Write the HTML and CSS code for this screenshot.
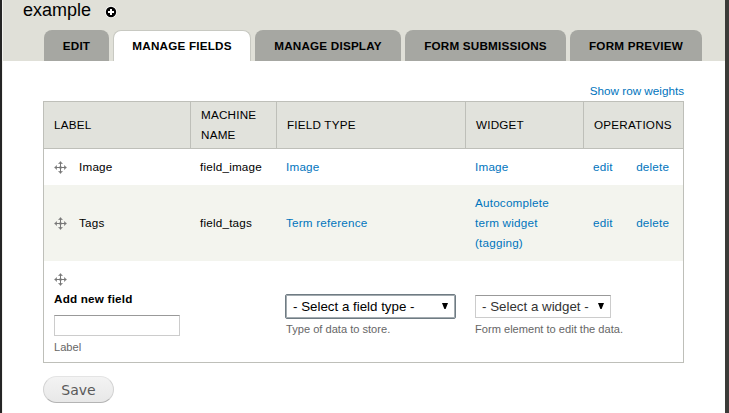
FILE: index.html
```
<!DOCTYPE html>
<html lang="en">
<head>
<meta charset="utf-8">
<title>example</title>
<link rel="stylesheet" href="styles.css">
</head>
<body>
<svg class="defs" width="0" height="0" aria-hidden="true">
  <symbol id="move" viewBox="0 0 13 13">
    <path d="M6 1h1v11H6zM1 6h11v1H1z" fill="#777"/>
    <path d="M6.5 0L9 3H4zM6.5 13L4 10h5zM0 6.5L3 4v5zM13 6.5L10 9V4z" fill="#777" opacity=".8"/>
    <path d="M5 5h3v3H5z" fill="#777" opacity=".35"/>
  </symbol>
</svg>
<div class="overlay">
  <header class="header">
    <div class="title-row">
      <h1>example</h1>
      <svg class="add" viewBox="0 0 12 12"><circle cx="6" cy="6" r="5.9" fill="#fff"/><circle cx="6" cy="6" r="5.2" fill="#000"/><path d="M5 3h2v2h2v2H7v2H5V7H3V5h2z" fill="#fff"/></svg>
    </div>
    <nav class="tabs">
      <a class="tab tab-edit">EDIT</a>
      <a class="tab tab-fields active">MANAGE FIELDS</a>
      <a class="tab tab-display">MANAGE DISPLAY</a>
      <a class="tab tab-submissions">FORM SUBMISSIONS</a>
      <a class="tab tab-preview">FORM PREVIEW</a>
    </nav>
  </header>
  <main class="content">
    <div class="weights"><a>Show row weights</a></div>
    <div class="table">
      <div class="row head">
        <div>LABEL</div><div>MACHINE NAME</div><div>FIELD TYPE</div><div>WIDGET</div><div>OPERATIONS</div>
      </div>
      <div class="row image-row">
        <div><svg class="move"><use href="#move"/></svg>Image</div><div>field_image</div><div><a>Image</a></div><div><a>Image</a></div><div class="ops"><a>edit</a><a>delete</a></div>
      </div>
      <div class="row tags-row">
        <div><svg class="move"><use href="#move"/></svg>Tags</div><div>field_tags</div><div><a>Term reference</a></div><div><a>Autocomplete term widget (tagging)</a></div><div class="ops"><a>edit</a><a>delete</a></div>
      </div>
      <div class="row new-row">
        <div class="new-label">
          <svg class="move"><use href="#move"/></svg>
          <strong>Add new field</strong>
          <input type="text" aria-label="Label">
          <small>Label</small>
        </div>
        <div></div>
        <div class="new-select">
          <span class="select focused"><span>- Select a field type -</span><svg viewBox="0 0 6 6"><path d="M0 0h6L3.6 6H2.4z"/></svg></span>
          <small>Type of data to store.</small>
        </div>
        <div class="new-select">
          <span class="select"><span>- Select a widget -</span><svg viewBox="0 0 6 6"><path d="M0 0h6L3.6 6H2.4z"/></svg></span>
          <small>Form element to edit the data.</small>
        </div>
        <div></div>
      </div>
    </div>
    <button class="save">Save</button>
  </main>
</div>
</body>
</html>
```
FILE: styles.css
```
* { box-sizing: border-box; }
body {
  margin: 0;
  height: 413px;
  overflow: hidden;
  padding: 0 4px 0 2px;
  background: linear-gradient(90deg, #252525 0 2px, #3b3b38 2px);
  font: 11.7px/20px "Liberation Sans", Arial, sans-serif;
  color: #000;
}
.defs { position: absolute; }
.overlay { height: 413px; background: #fff; border-left: 1px solid #f2f2ee; }
.header { height: 61px; background: #e0e0d8; display: flex; flex-direction: column; }
.title-row { height: 30px; padding-left: 20px; display: flex; }
h1 { margin: 0; font-size: 18px; line-height: 20px; font-weight: normal; width: 82px; }
.add { width: 12px; height: 12px; margin-top: 6px; }
.tabs { display: flex; gap: 4px; padding-left: 41px; height: 31px; }
.tab {
  height: 31px;
  border-radius: 8px 8px 0 0;
  background: #a6a7a2;
  font-size: 11.7px;
  line-height: 32px;
  font-weight: bold;
  letter-spacing: 0.2px;
  text-align: center;
  white-space: nowrap;
}
.tab-edit { width: 65px; }
.tab-fields { width: 138px; }
.tab-display { width: 146px; }
.tab-submissions { width: 161px; }
.tab-preview { width: 132px; }
.tab.active { background: #fff; border: 1px solid #c8c9c2; border-bottom: 0; line-height: 30px; }
.content { padding: 20px 41px 0 40px; }
a { color: #0074bd; }
.tab { color: #000; }
.weights { height: 20px; text-align: right; }
.table { width: 641px; border: 1px solid #bebfb9; letter-spacing: 0.2px; }
.row { display: grid; grid-template-columns: 146px 86px 189px 118px 100px; align-items: center; }
.row > div { padding-left: 10px; }
.head { height: 47px; background: #e1e2dc; align-items: stretch; }
.head > div { display: flex; align-items: center; border-bottom: 1px solid #bebfb9; }
.head > div + div { border-left: 1px solid #bebfb9; }
.image-row { height: 36px; }
.tags-row { height: 76px; background: #f3f4ee; }
.new-row { height: 101px; align-items: start; }
.move { width: 13px; height: 13px; display: inline-block; vertical-align: -3px; margin-right: 12px; }
.tags-row > div:nth-child(4) { padding-right: 28px; }
.ops { display: flex; gap: 23.5px; }
.new-label { display: flex; flex-direction: column; align-items: flex-start; padding-top: 12px; }
.new-label strong { margin-top: 3px; }
input { width: 126px; height: 21px; margin-top: 6px; padding: 2px; border: 1px solid #ccc; border-top-color: #999; background: #fff; }
small { font-size: 11.1px; line-height: 18px; color: #666; letter-spacing: 0; white-space: nowrap; }
.new-label small { margin-top: 2px; }
.new-select { display: flex; flex-direction: column; align-items: flex-start; padding-top: 34px; }
.select {
  display: flex;
  align-items: center;
  justify-content: space-between;
  width: 136px;
  height: 23px;
  padding: 0 6px;
  border: 1px solid #ccc;
  border-top-color: #999;
  font-size: 13.33px;
  letter-spacing: 0;
  color: #333;
}
.select svg { width: 6px; height: 6px; margin-top: -2px; }
.select.focused { width: 171px; height: 25px; margin: -1px 0 -1px -1px; padding: 0 6px; border: 1px solid #6f7b83; box-shadow: inset 0 0 0 1px #a3abb0; border-radius: 2px; color: #000; padding: 0 7px; }
.new-select small { margin-top: 2px; }
.save {
  display: block;
  width: 71px;
  height: 27px;
  margin-top: 13px;
  padding: 0;
  border: 1px solid #ccc;
  border-color: #e4e4e4 #d2d2d2 #b4b4b4;
  border-radius: 14px;
  background: linear-gradient(#f3f3f3, #e8e8e8);
  font: 14px "DejaVu Sans", Verdana, sans-serif;
  color: #5a5a5a;
}
```
